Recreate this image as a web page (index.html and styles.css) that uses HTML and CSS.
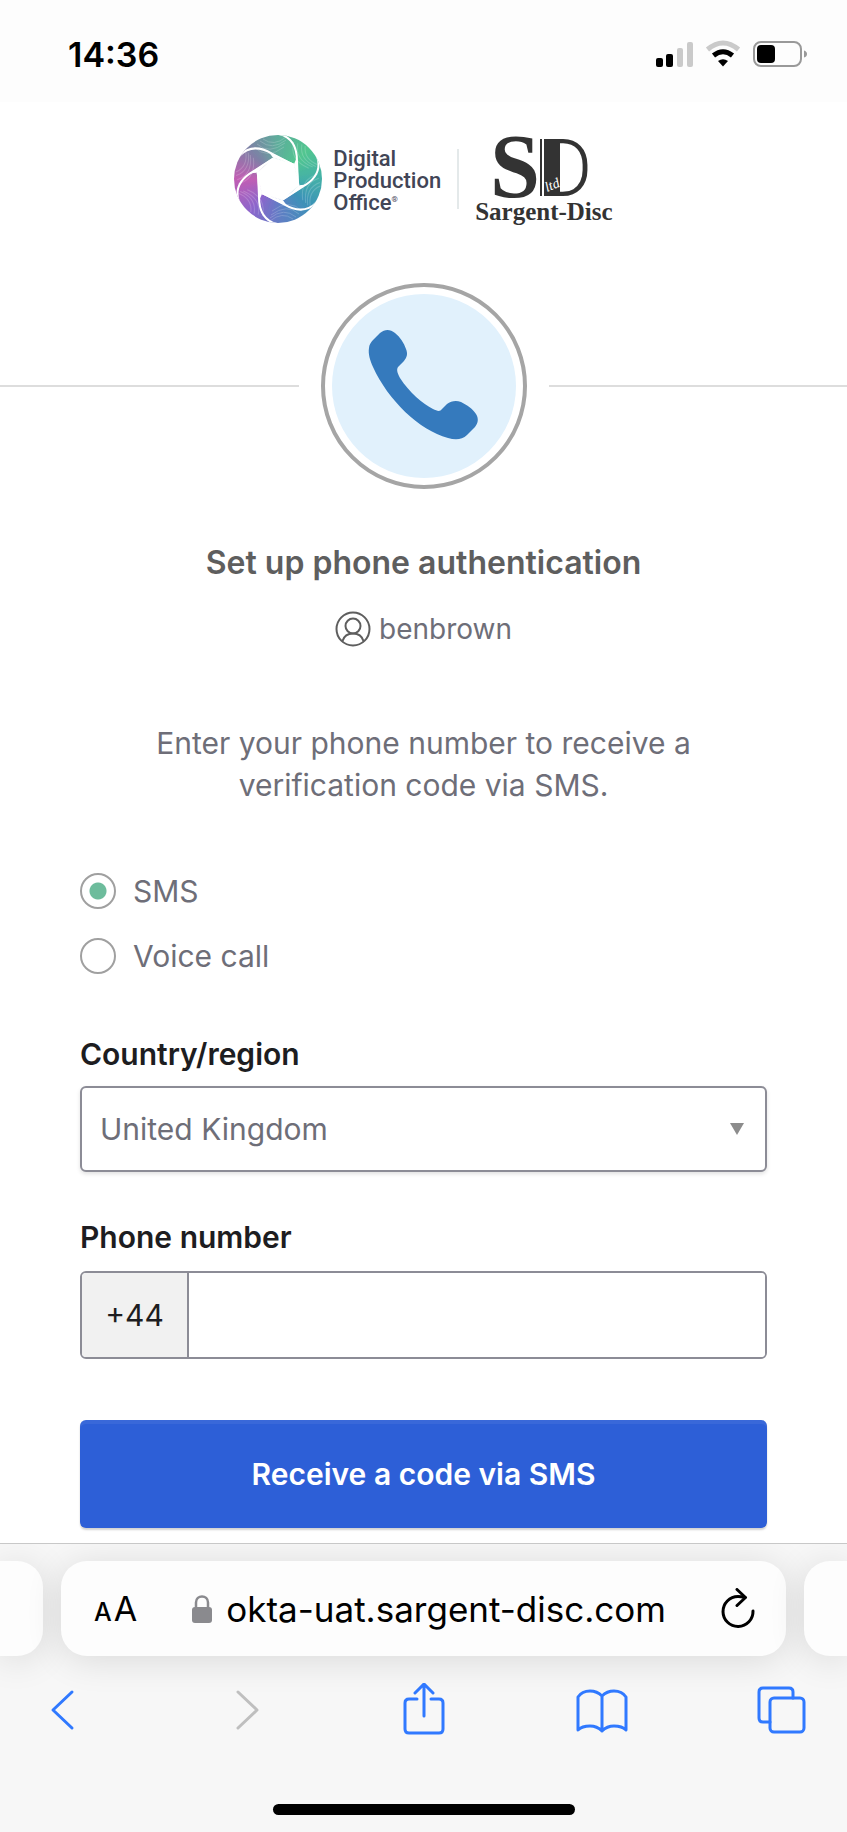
FILE: index.html
```html
<!DOCTYPE html>
<html lang="en">
<head>
<meta charset="UTF-8">
<meta name="viewport" content="width=device-width, initial-scale=1.0">
<title>Set up phone authentication</title>
<link rel="stylesheet" href="styles.css">
</head>
<body>
<header class="status-bar">
  <span class="time">14:36</span>
  <svg class="status-icons" width="152" height="28" viewBox="0 0 152 28" aria-hidden="true">
    <rect x="0" y="18" width="7" height="9" rx="2"/>
    <rect x="10" y="14" width="7" height="13" rx="2"/>
    <rect x="21" y="8" width="6" height="19" rx="2" fill="#cacaca"/>
    <rect x="31" y="2" width="6" height="25" rx="2" fill="#cacaca"/>
    <path d="M51.500 9.500Q67 -3.500 82.500 9.500" fill="none" stroke="#cacaca" stroke-width="5"/>
    <path d="M57.500 15.500Q67 8 76.500 15.500" fill="none" stroke="#000" stroke-width="5"/>
    <path d="M62 21Q67 17.500 72 21L67 26.500Z"/>
    <rect x="98" y="2" width="47" height="24" rx="7" fill="none" stroke="#999" stroke-width="2"/>
    <rect x="101" y="5" width="18" height="18" rx="4"/>
    <path d="M148 10.500Q151 11.500 151 14T148 17.500Z" fill="#999"/>
  </svg>
</header>

<main class="page">
  <div class="logos">
    <svg class="dpo-mark" viewBox="0 0 88 88" aria-hidden="true">
      <defs>
        <g id="blade">
          <g fill="none" stroke="#fff" stroke-width="1" opacity=".18">
            <path d="M20 12Q33 25 50 12"/>
            <path d="M23 9Q35 20 51 8"/>
            <path d="M26 6Q38 16 52 5"/>
            <path d="M29 4Q40 12 52 2"/>
          </g>
          <path d="M60 29L63 22L65 50Z" fill="#fff"/>
          <path d="M45 -1C57 2 63 11 63 26L64 50" fill="none" stroke="#fff" stroke-width="2"/>
        </g>
      </defs>
      <use href="#blade"/>
      <use href="#blade" transform="rotate(60 44 44)"/>
      <use href="#blade" transform="rotate(120 44 44)"/>
      <use href="#blade" transform="rotate(180 44 44)"/>
      <use href="#blade" transform="rotate(240 44 44)"/>
      <use href="#blade" transform="rotate(300 44 44)"/>
      <path d="M65 50L49 65L28 59L23 38L39 23L60 29Z" fill="#fff" stroke="#fff" stroke-width="1"/>
    </svg>
    <div class="dpo-name">Digital<br>Production<br>Office<sup>®</sup></div>
    <div class="logo-divider"></div>
    <div class="sargent">
      <svg class="sd-mark" width="100" height="106" viewBox="0 -20 100 106" fill="#333" aria-hidden="true">
        <text x="-4" y="62" class="sd-s">S</text>
        <text x="46" y="61" class="sd-d">D</text>
        <rect x="46" y="4" width="2" height="57"/>
        <rect x="50" y="4" width="16" height="57"/>
        <text x="53" y="57" class="sd-ltd" transform="rotate(-22 53 57)">ltd</text>
      </svg>
      <span class="sargent-name">Sargent-Disc</span>
    </div>
  </div>

  <div class="beacon-row">
    <div class="beacon">
      <svg viewBox="0 0 184 184" aria-hidden="true">
        <path d="M37 54C37 51 39 48 41 46L48 39C53 35 58 35 63 39C68 43 72 49 74 55C76 60 75 63 72 67L66 73C64 76 66 80 68 84C77 98 91 110 101 115C105 117 108 118 110 115L115 110C119 107 124 106 129 108C135 111 141 115 144 120C147 125 146 129 143 133L135 141C130 146 123 146 116 144C87 136 56 106 41 73C38 66 36 60 37 54Z" fill="#357abd"/>
      </svg>
    </div>
  </div>

  <h1>Set up phone authentication</h1>
  <div class="user">
    <svg width="36" height="36" viewBox="0 0 36 36" fill="none" stroke="#5e5e5e" stroke-width="2" aria-hidden="true">
      <circle cx="18" cy="18" r="16.500"/>
      <circle cx="18" cy="15" r="7.500"/>
      <path d="M7.500 30C9 25 13 22.500 18 22.500S27 25 28.500 30"/>
    </svg>
    <span>benbrown</span>
  </div>

  <form>
    <p class="explain">Enter your phone number to receive a verification code via SMS.</p>

    <div class="methods">
      <label class="method"><input type="radio" name="method" checked> SMS</label>
      <label class="method"><input type="radio" name="method"> Voice call</label>
    </div>

    <label class="field-label" for="country">Country/region</label>
    <div class="select-box">
      <select id="country">
        <option>United Kingdom</option>
      </select>
    </div>

    <label class="field-label" for="phone">Phone number</label>
    <div class="phone-box">
      <span class="prefix">+44</span>
      <input type="tel" id="phone">
    </div>

    <button class="submit" type="button">Receive a code via SMS</button>
  </form>
</main>

<footer class="browser">
  <div class="tabs">
    <div class="side-tab left"></div>
    <div class="address">
      <button class="text-size" type="button" aria-label="Page settings"><small>A</small>A</button>
      <div class="url">
        <svg width="20" height="28" viewBox="0 0 20 28" aria-hidden="true">
          <path d="M4 13V7.500C4 -.5 16 -.5 16 7.500V13" fill="none" stroke="#8a8a8e" stroke-width="2.500"/>
          <rect x="0" y="12" width="20" height="16" rx="3" fill="#8a8a8e"/>
        </svg>
        <span>okta-uat.sargent-disc.com</span>
      </div>
      <button class="reload" type="button" aria-label="Reload">
        <svg width="34" height="42" viewBox="0 0 34 42" fill="none" stroke="#000" stroke-width="3" stroke-linecap="round" stroke-linejoin="round">
          <path d="M32 23A15 15 0 1 1 17 8.500Q20 8.500 24 9.500"/>
          <path d="M16 1.500L24.500 9.500L16 17.500"/>
        </svg>
      </button>
    </div>
    <div class="side-tab right"></div>
  </div>
  <nav class="toolbar">
    <button type="button" aria-label="Back">
      <svg viewBox="0 0 54 54"><path d="M36 9L17 27L36 45"/></svg>
    </button>
    <button type="button" aria-label="Forward" disabled>
      <svg viewBox="0 0 54 54"><path d="M22 9L41 27L22 45"/></svg>
    </button>
    <button type="button" aria-label="Share">
      <svg viewBox="0 0 54 54"><path d="M21 16H13Q9 16 9 20V46Q9 50 13 50H43Q47 50 47 46V20Q47 16 43 16H35M28 33V2M19 10L28 1L37 10"/></svg>
    </button>
    <button type="button" aria-label="Bookmarks">
      <svg viewBox="0 0 54 54"><path d="M27 13Q22 8 15 8Q7 8 3 14V47Q7 43 15 43Q22 43 27 48Q32 43 39 43Q47 43 51 47V14Q47 8 39 8Q32 8 27 13ZM27 13V48"/></svg>
    </button>
    <button type="button" aria-label="Tabs">
      <svg viewBox="0 0 54 54"><rect x="15" y="15" width="34" height="34" rx="4"/><path d="M15 39H8Q4 39 4 35V9Q4 5 8 5H34Q38 5 38 9V15"/></svg>
    </button>
  </nav>
  <div class="home-indicator"></div>
</footer>
</body>
</html>
```
FILE: styles.css
```css
* {
  box-sizing: border-box;
}

body {
  margin: 0;
  min-height: 100vh;
  display: flex;
  flex-direction: column;
  background-color: #fff;
  color: #6e6e78;
  font-family: Inter, "Liberation Sans", sans-serif;
  font-size: 30px;
}

button,
input,
select {
  font: inherit;
}

button {
  border: none;
  padding: 0;
  background: none;
}

.status-bar {
  display: flex;
  justify-content: space-between;
  align-items: center;
  height: 102px;
  padding: 6px 39px 0 68px;
  background-color: #fdfdfd;
}

.time {
  color: #000;
  font-size: 34px;
  font-weight: 600;
}

.page {
  flex: 1;
}

/* logos */

.logos {
  display: flex;
  justify-content: center;
  align-items: center;
  height: 88px;
  margin-top: 33px;
}

.dpo-mark {
  width: 88px;
  height: 88px;
  border-radius: 50%;
  background: conic-gradient(#5fae9c, #52c690 45deg, #45b0a8 90deg, #3d93b8 130deg, #5f7fc4 175deg, #8c66cc 220deg, #c25fb4 270deg, #7f80a6 315deg, #5fae9c);
}

.dpo-name {
  margin-left: 11px;
  padding-top: 3px;
  color: #414556;
  font-family: Roboto, sans-serif;
  font-size: 22px;
  font-weight: 500;
  line-height: 22px;
}

.dpo-name sup {
  font-size: 8px;
  line-height: 0;
  vertical-align: 8px;
}

.logo-divider {
  width: 2px;
  height: 60px;
  margin: 0 16px;
  background-color: #e4e9ea;
}

.sargent {
  display: flex;
  flex-direction: column;
  align-items: center;
  color: #333;
}

.sd-mark {
  margin: -20px 0;
}

.sargent-name {
  font-family: "Liberation Serif", serif;
  font-size: 25px;
  font-weight: 700;
  line-height: 22px;
}

.sd-s {
  font: 700 90px "Liberation Serif", serif;
}

.sd-d {
  font: 300 80px Roboto, sans-serif;
}

.sd-ltd {
  fill: #fff;
  font: italic 14px "Liberation Serif", serif;
}

/* phone badge with a rule on each side */

.beacon-row {
  display: flex;
  align-items: center;
  gap: 22px;
  margin-top: 60px;
}

.beacon-row::before,
.beacon-row::after {
  content: "";
  flex: 1;
  height: 2px;
  background-color: #ddd;
}

.beacon {
  width: 206px;
  height: 206px;
  padding: 7px;
  border: 4px solid #a5a5a5;
  border-radius: 50%;
}

.beacon svg {
  display: block;
  border-radius: 50%;
  background-color: #e1f1fc;
}

h1 {
  margin: 53px 0 0;
  color: #5e5e5e;
  font-size: 32px;
  font-weight: 600;
  line-height: 42px;
  text-align: center;
}

.user {
  display: flex;
  justify-content: center;
  align-items: center;
  gap: 8px;
  margin-top: 27px;
  font-size: 28px;
  line-height: 36px;
}

/* form */

form {
  padding: 0 80px;
}

.explain {
  max-width: 580px;
  margin: 75px auto 0;
  line-height: 42px;
  text-align: center;
}

.methods {
  display: grid;
  gap: 29px;
  margin-top: 67px;
}

.method {
  display: flex;
  align-items: center;
  gap: 17px;
  line-height: 36px;
}

.method input {
  appearance: none;
  width: 36px;
  height: 36px;
  margin: 0;
  border: 2px solid #a0a0a0;
  border-radius: 50%;
}

.method input:checked {
  background: radial-gradient(#6dbc9c 8px, transparent 9px);
}

.field-label {
  display: block;
  margin-top: 60px;
  color: #1d1d21;
  font-weight: 600;
  line-height: 40px;
}

.select-box {
  display: grid;
  align-items: center;
  margin: 12px 0 45px;
}

.select-box select {
  grid-area: 1 / 1;
  appearance: none;
  width: 100%;
  height: 86px;
  padding: 0 18px;
  border: 2px solid #8c8c96;
  border-radius: 6px;
  background-color: #fff;
  box-shadow: 0 2px 4px rgba(0, 0, 0, 0.12);
  color: #6e6e78;
}

.select-box::after {
  content: "";
  grid-area: 1 / 1;
  justify-self: end;
  margin-right: 23px;
  border: 7px solid transparent;
  border-top: 12px solid #8c8c8c;
  border-bottom: none;
  pointer-events: none;
}

.select-box + .field-label {
  margin-top: 0;
}

.phone-box {
  display: flex;
  height: 88px;
  margin-top: 14px;
  border: 2px solid #8c8c96;
  border-radius: 6px;
  overflow: hidden;
}

.prefix {
  display: flex;
  justify-content: center;
  align-items: center;
  width: 107px;
  border-right: 2px solid #8c8c96;
  background-color: #f1f1f1;
  color: #1d1d21;
}

.phone-box input {
  flex: 1;
  min-width: 0;
  padding: 0 18px;
  border: none;
}

.submit {
  width: 100%;
  height: 108px;
  margin: 61px 0 14px;
  border-radius: 6px;
  background-color: #2d5fd7;
  box-shadow: 0 2px 2px rgba(0, 0, 0, 0.18), inset 0 4px 0 rgba(255, 255, 255, 0.06);
  color: #fff;
  font-weight: 600;
}

/* browser bar */

.browser {
  border-top: 1px solid #c8c8c8;
  background-color: #f7f7f7;
  color: #000;
  overflow: hidden;
}

.tabs {
  display: flex;
  gap: 18px;
  height: 95px;
  margin-top: 17px;
}

.side-tab,
.address {
  background-color: #fdfdfd;
  box-shadow: 0 4px 36px rgba(0, 0, 0, 0.12);
}

.side-tab {
  width: 43px;
}

.left {
  border-radius: 0 26px 26px 0;
}

.right {
  border-radius: 26px 0 0 26px;
}

.address {
  flex: 1;
  display: flex;
  justify-content: space-between;
  align-items: center;
  padding: 0 31px 0 33px;
  border-radius: 26px;
}

.text-size {
  font-size: 34px;
}

.text-size small {
  margin-right: 2px;
  font-size: 25px;
  font-weight: 500;
}

.url {
  display: flex;
  align-items: center;
  gap: 14px;
  font-size: 35px;
}

.reload svg {
  display: block;
}

.toolbar {
  display: flex;
  justify-content: space-between;
  margin-top: 27px;
  padding: 0 38px 0 36px;
}

.toolbar svg {
  display: block;
  width: 54px;
  height: 54px;
  fill: none;
  stroke: #3079ff;
  stroke-width: 3;
  stroke-linecap: round;
  stroke-linejoin: round;
}

.toolbar button:disabled svg {
  stroke: #bfbfbf;
}

.home-indicator {
  width: 302px;
  height: 11px;
  margin: 67px auto 17px;
  border-radius: 6px;
  background-color: #000;
}
```
